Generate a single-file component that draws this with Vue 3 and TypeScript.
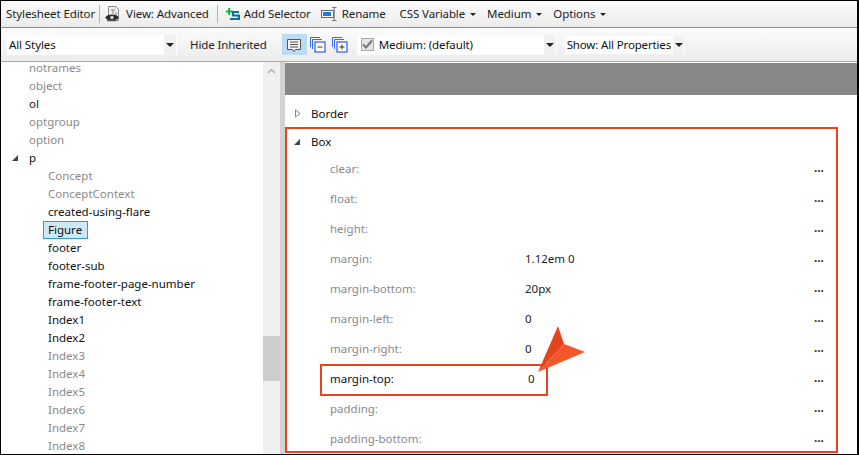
<script setup lang="ts">
const tree: { t: string; dim?: boolean; child?: boolean; sel?: boolean; open?: boolean }[] = [
  { t: 'notrames', dim: true },
  { t: 'object', dim: true },
  { t: 'ol' },
  { t: 'optgroup', dim: true },
  { t: 'option', dim: true },
  { t: 'p', open: true },
  { t: 'Concept', dim: true, child: true },
  { t: 'ConceptContext', dim: true, child: true },
  { t: 'created-using-flare', child: true },
  { t: 'Figure', child: true, sel: true },
  { t: 'footer', child: true },
  { t: 'footer-sub', child: true },
  { t: 'frame-footer-page-number', child: true },
  { t: 'frame-footer-text', child: true },
  { t: 'Index1', child: true },
  { t: 'Index2', child: true },
  { t: 'Index3', dim: true, child: true },
  { t: 'Index4', dim: true, child: true },
  { t: 'Index5', dim: true, child: true },
  { t: 'Index6', dim: true, child: true },
  { t: 'Index7', dim: true, child: true },
  { t: 'Index8', dim: true, child: true },
]
const props: { k: string; v?: string; on?: boolean }[] = [
  { k: 'clear:' },
  { k: 'float:' },
  { k: 'height:' },
  { k: 'margin:', v: '1.12em 0' },
  { k: 'margin-bottom:', v: '20px' },
  { k: 'margin-left:', v: '0' },
  { k: 'margin-right:', v: '0' },
  { k: 'margin-top:', v: '0', on: true },
  { k: 'padding:' },
  { k: 'padding-bottom:' },
]
</script>

<template>
  <div class="app">
    <div class="bar1">
      <span class="item title">Stylesheet Editor</span>
      <span class="sep"></span>
      <svg class="ic" width="16" height="18" viewBox="0 0 16 18">
        <path d="M3.500 1.500h7l3 3v11h-10z" fill="#eee" stroke="#888" />
        <path d="M6 5h4M8 5v4M10 8h2M10 10h2" stroke="#888" />
        <ellipse cx="7" cy="12.500" rx="6.500" ry="3" fill="#2a2a2a" />
        <circle cx="7" cy="12.500" r="1.800" fill="#cfcfcf" />
        <path d="M2 15.500h9" stroke="#555" stroke-width="1.500" />
      </svg>
      <span class="item view">View: Advanced</span>
      <span class="sep sep2"></span>
      <svg class="ic add" width="14" height="13" viewBox="0 0 14 13">
        <path d="M0 3.500h6.500M3.200 0v7" stroke="#1fae3f" stroke-width="2" />
        <path d="M13 4H7v3.500h6V11H4" fill="none" stroke="#0d6f97" stroke-width="2.200" />
      </svg>
      <span class="item addt">Add Selector</span>
      <svg class="ic ren" width="16" height="14" viewBox="0 0 16 14">
        <rect x="0.500" y="3.500" width="12" height="7" fill="#fff" stroke="#667" />
        <rect x="2" y="5" width="8" height="4" fill="#1d7bd8" />
        <path d="M11 0.500h4.500M13.200 0.500v13M11 13.500h4.500" fill="none" stroke="#777" />
      </svg>
      <span class="item rent">Rename</span>
      <span class="item menu m1">CSS Variable<i class="tri small"></i></span>
      <span class="item menu m2">Medium<i class="tri small"></i></span>
      <span class="item menu m3">Options<i class="tri small"></i></span>
    </div>
    <div class="bar2">
      <div class="combo c1"><span>All Styles</span><b><i class="tri"></i></b></div>
      <span class="item hide">Hide Inherited</span>
      <div class="tg on">
        <svg width="16" height="16" viewBox="0 0 16 16">
          <path d="M1.500 2.500h13v10h-5l-1.500 2-1.500-2h-5z" fill="#f4f4f4" stroke="#555" />
          <path d="M4 5h8M4 7.500h8M4 10h8" stroke="#555" />
        </svg>
      </div>
      <svg class="st" width="16" height="16" viewBox="0 0 16 16">
        <path d="M0.500 10V0.500h9.500M2.500 12V2.500h9.500" fill="none" stroke="#3a66e6" />
        <rect x="5" y="5" width="10" height="10" fill="#fff" stroke="#3a66e6" stroke-width="1.300" />
        <path d="M7.500 10h5" stroke="#333" />
      </svg>
      <svg class="st st2" width="16" height="16" viewBox="0 0 16 16">
        <path d="M0.500 10V0.500h9.500M2.500 12V2.500h9.500" fill="none" stroke="#3a66e6" />
        <rect x="5" y="5" width="10" height="10" fill="#fff" stroke="#3a66e6" stroke-width="1.300" />
        <path d="M7.500 10h5M10 7.500v5" stroke="#333" />
      </svg>
      <div class="combo c2">
        <span class="cb">
          <svg width="11" height="11" viewBox="0 0 11 11"><path d="M1 5.500l3 3 6-7" fill="none" stroke="#777" stroke-width="2" /></svg>
        </span>
        <span>Medium: (default)</span><b><i class="tri"></i></b>
      </div>
      <div class="combo c3"><span>Show: All Properties</span><b><i class="tri"></i></b></div>
    </div>
    <div class="main">
      <div class="left">
        <div class="tree">
          <div v-for="n in tree" :key="n.t" class="node" :class="{ dim: n.dim, child: n.child }">
            <i v-if="n.open" class="open"></i>
            <span :class="{ sel: n.sel }">{{ n.t }}</span>
          </div>
        </div>
        <div class="sb">
          <svg class="up" width="9" height="6" viewBox="0 0 9 6"><path d="M1 5l3.500-3.500L8 5" fill="none" stroke="#a8a8a8" stroke-width="1.200" /></svg>
          <div class="thumb"></div>
        </div>
      </div>
      <div class="split"></div>
      <div class="right">
        <div class="band"></div>
        <div class="group g1">
          <svg class="closed" width="6" height="9" viewBox="0 0 6 9"><path d="M0.500 0.800L5 4.500 0.500 8.200z" fill="#fff" stroke="#8a8a8a" /></svg>
          Border
        </div>
        <div class="group g2"><i class="open"></i>Box</div>
        <div v-for="p in props" :key="p.k" class="prop" :class="{ on: p.on }">
          <span class="k">{{ p.k }}</span>
          <span class="v">{{ p.v }}</span>
          <span class="dots">...</span>
        </div>
      </div>
      <div class="hl big"></div>
      <div class="hl small-box"></div>
      <svg class="pointer" width="48" height="48" viewBox="0 0 48 48">
        <path d="M20 0L26 18 0 46z" fill="#e5431c" />
        <path d="M26 18L47 26 0 46z" fill="#f4582a" />
      </svg>
    </div>
  </div>
</template>

<style scoped>
.app {
  width: 859px;
  height: 455px;
  box-sizing: border-box;
  border: 1px solid #000;
  border-width: 1px 2px 1px 1px;
  font: 11.5px/18px "Noto Sans", "Open Sans", sans-serif;
  color: #111;
  background: #fff;
  display: flex;
  flex-direction: column;
  overflow: hidden;
}
.bar1 {
  height: 26px;
  display: flex;
  align-items: center;
  background: linear-gradient(#fbfbfb, #ececec);
  border-bottom: 1px solid #8e8e8e;
  flex: none;
  letter-spacing: -0.1px;
}
.item { white-space: nowrap; color: #222; }
.title { margin-left: 5px; }
.sep { width: 1px; height: 18px; background: #b4b4b4; margin: 0 5px 0 4px; }
.sep2 { margin: 0 8px; }
.view { margin-left: 5px; }
.rent { margin-left: 5px; }
.addt { margin-left: 4px; }
.ren { margin-left: 10px; }
.m1 { margin-left: 14px; }
.m2 { margin-left: 11px; }
.m3 { margin-left: 11px; }
.tri { display: inline-block; border-left: 4px solid transparent; border-right: 4px solid transparent; border-top: 4px solid #222; }
.tri.small { border-width: 3px 3px 0; margin-left: 5px; vertical-align: 2px; }
.bar2 {
  height: 33px;
  display: flex;
  align-items: center;
  background: linear-gradient(#fbfbfb, #ececec);
  border-bottom: 1px solid #a8a8a8;
  flex: none;
  letter-spacing: -0.1px;
}
.combo { height: 20px; background: #fff; display: flex; align-items: center; white-space: nowrap; position: relative; }
.combo b { display: flex; align-items: center; justify-content: center; background: #f1f1f1; height: 100%; }
.c1 { width: 170px; margin-left: 6px; padding-left: 2px; box-sizing: border-box; justify-content: space-between; }
.c1 b { width: 12px; margin-right: 1px; }
.hide { margin-left: 13px; }
.tg { width: 25px; height: 21px; margin-left: 15px; display: flex; align-items: center; justify-content: center; }
.tg.on { background: #bcdcf4; }
.st { margin-left: 3px; }
.st2 { margin-left: 6px; }
.c2 { width: 200px; margin-left: 9px; box-sizing: border-box; padding-left: 4px; gap: 5px; }
.c2 b { margin-left: auto; width: 12px; margin-right: 1px; }
.cb { width: 13px; height: 13px; box-sizing: border-box; background: #e4e4e4; border: 1px solid #aaa; display: flex; }
.c3 { margin-left: 8px; padding-left: 2px; height: 18px; letter-spacing: -0.15px; }
.c3 b { width: 11px; margin-left: 2px; margin-right: 1px; }
.main { flex: 1; display: flex; position: relative; min-height: 0; }
.left { width: 279px; display: flex; flex: none; }
.tree { width: 262px; margin-top: -3px; flex: none; }
.node { height: 18px; padding-left: 28px; position: relative; white-space: nowrap; color: #111; }
.node.dim { color: #8a8a8a; }
.node.child { padding-left: 47px; }
.node .open { position: absolute; left: 11px; top: 6px; }
.sel { display: inline-block; background: #cfe8f8; border: 1px solid #2aa0d8; margin: 0 0 0 -5px; padding: 0 5px 0 4px; height: 16px; line-height: 16px; vertical-align: top; }
.open { display: inline-block; width: 0; height: 0; border-left: 6px solid transparent; border-bottom: 6px solid #444; }
.closed { position: absolute; left: 10px; top: 4px; }
.sb { width: 17px; background: #f0f0f0; position: relative; flex: none; }
.up { position: absolute; left: 4px; top: 6px; }
.thumb { position: absolute; left: 0; right: 0; top: 274px; height: 45px; background: #cdcdcd; }
.split { width: 5px; background: #d2d2d2; flex: none; }
.right { flex: 1; min-width: 0; }
.band { height: 32px; background: #878787; margin-top: 1px; }
.group { height: 18px; display: flex; align-items: center; padding-left: 26px; position: relative; }
.group i { position: absolute; left: 9px; top: 6px; }
.g1 { margin-top: 10px; }
.g2 { margin-top: 10px; margin-bottom: 3px; }
.prop { height: 30px; display: flex; align-items: center; position: relative; color: #8a8a8a; }
.prop .k { width: 195px; margin-left: 45px; flex: none; }
.prop .v { color: #222; flex: 1; }
.prop.on .k { color: #111; }
.prop.on .v { padding-left: 3px; }
.dots { color: #333; position: absolute; left: 529px; top: 5px; font-weight: 700; }
.hl { position: absolute; border: 2px solid #e8431c; box-sizing: border-box; pointer-events: none; }
.big { left: 284px; top: 65px; width: 553px; height: 326px; }
.small-box { left: 319px; top: 302px; width: 228px; height: 32px; }
.pointer { position: absolute; left: 537px; top: 264px; }
</style>

<style>
html, body { margin: 0; padding: 0; background: #fff; }
</style>
